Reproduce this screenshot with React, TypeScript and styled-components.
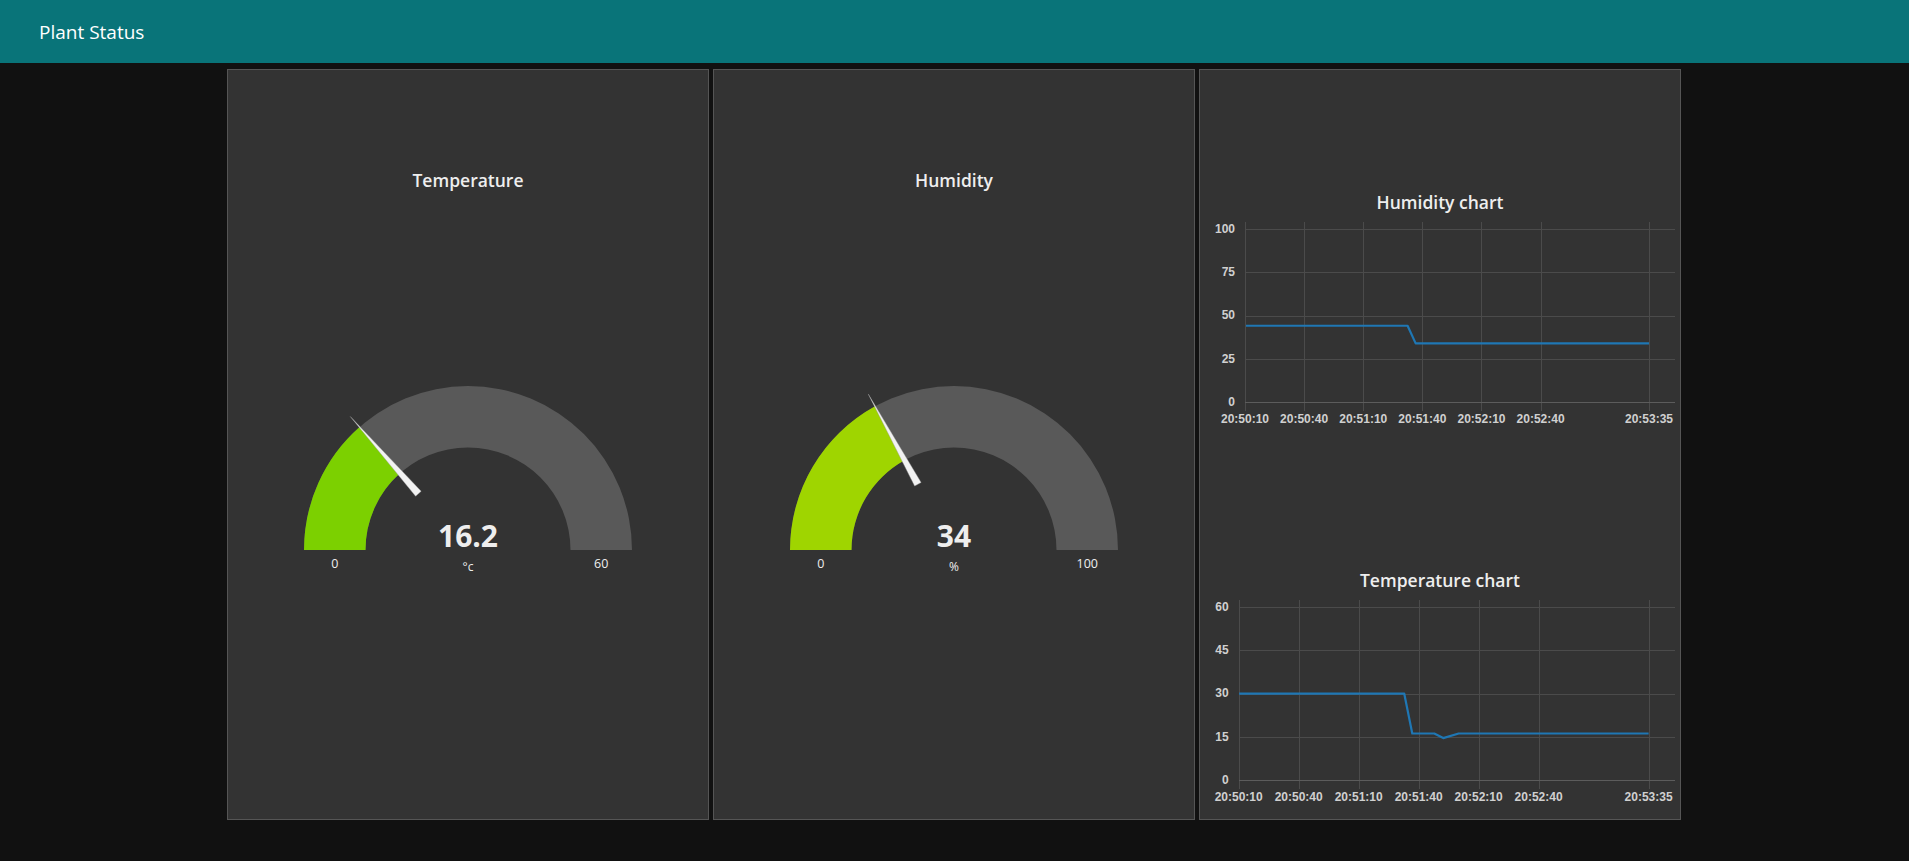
import React from 'react';
import styled, { createGlobalStyle } from 'styled-components';

const GlobalStyle = createGlobalStyle`
  html, body {
    margin: 0;
    padding: 0;
    background: #111111;
  }
  body {
    font-family: "Open Sans", "Noto Sans", sans-serif;
  }
`;

const Page = styled.div`
  min-height: 861px;
  background: #111111;
`;

const Toolbar = styled.header`
  height: 63px;
  box-sizing: border-box;
  background: #097479;
  display: flex;
  align-items: center;
  padding: 2px 0 0 39px;
`;

const ToolbarTitle = styled.h1`
  margin: 0;
  font-size: 19px;
  font-weight: 400;
  line-height: 19px;
  color: #ffffff;
`;

const Board = styled.main`
  display: flex;
  justify-content: center;
  gap: 4px;
  padding: 6px 1px 0 0;
`;

const Card = styled.section`
  width: 482px;
  height: 751px;
  box-sizing: border-box;
  background: #333333;
  border: 1px solid #555555;
  display: flex;
  flex-direction: column;
  align-items: center;
`;

const WidgetTitle = styled.h2<{ $top: number }>`
  margin: ${(p) => p.$top}px 0 0;
  font-size: 17.5px;
  font-weight: 600;
  line-height: 24px;
  color: #eeeeee;
`;

const Drawing = styled.svg<{ $top: number }>`
  display: block;
  margin-top: ${(p) => p.$top}px;
  flex: none;
`;

const GaugeValue = styled.text`
  font-family: "Open Sans", "Noto Sans", sans-serif;
  font-size: 30px;
  font-weight: 700;
  fill: #eeeeee;
`;

const GaugeLabel = styled.text<{ $size?: number }>`
  font-family: "Open Sans", "Noto Sans", sans-serif;
  font-size: ${(p) => p.$size ?? 12.5}px;
  font-weight: 400;
  fill: #eeeeee;
`;

const AxisLabel = styled.text`
  font-family: "Liberation Sans", Arial, sans-serif;
  font-size: 12px;
  font-weight: 700;
  fill: #d0d0d0;
`;

const GridLine = styled.line<{ $axis?: boolean }>`
  stroke: ${(p) => (p.$axis ? '#5c5c5c' : '#4b4b4b')};
  stroke-width: 1;
  shape-rendering: crispEdges;
`;

const DataLine = styled.polyline`
  fill: none;
  stroke: #1f77b4;
  stroke-width: 2.2;
  stroke-linejoin: round;
`;

type GaugeProps = {
  value: number;
  display: string;
  min: number;
  max: number;
  unit: string;
  color: string;
};

function Gauge({ value, display, min, max, unit, color }: GaugeProps) {
  const cx = 240;
  const cy = 180;
  const R = 164;
  const r = 102.5;
  const frac = (value - min) / (max - min);
  const a = Math.PI * (1 - frac);
  const c = Math.cos(a);
  const s = Math.sin(a);
  const ox = cx + R * c;
  const oy = cy - R * s;
  const ix = cx + r * c;
  const iy = cy - r * s;
  const bg = `M ${cx - R} ${cy} A ${R} ${R} 0 0 1 ${cx + R} ${cy} L ${cx + r} ${cy} A ${r} ${r} 0 0 0 ${cx - r} ${cy} Z`;
  const fill = `M ${cx - R} ${cy} A ${R} ${R} 0 0 1 ${ox} ${oy} L ${ix} ${iy} A ${r} ${r} 0 0 0 ${cx - r} ${cy} Z`;
  const tipR = 178;
  const baseR = 75;
  const hw = 3.7;
  const tx = cx + tipR * c;
  const ty = cy - tipR * s;
  const bx = cx + baseR * c;
  const by = cy - baseR * s;
  const px = s * hw;
  const py = c * hw;
  const needle = `${tx},${ty} ${bx + px},${by + py} ${bx - px},${by - py}`;
  const labelX = (R + r) / 2;
  return (
    <Drawing $top={178} width={480} height={215} viewBox="0 0 480 215">
      <path d={bg} fill="#595959" />
      <path d={fill} fill={color} />
      <polygon points={needle} fill="#f2f2f2" stroke="#9a9a9a" strokeWidth={0.4} />
      <GaugeValue x={cx} y={176.7} textAnchor="middle">
        {display}
      </GaugeValue>
      <GaugeLabel x={cx - labelX} y={197.5} textAnchor="middle">
        {min}
      </GaugeLabel>
      <GaugeLabel x={cx + labelX} y={197.5} textAnchor="middle">
        {max}
      </GaugeLabel>
      <GaugeLabel $size={12} x={cx} y={200.8} textAnchor="middle">
        {unit}
      </GaugeLabel>
    </Drawing>
  );
}

type ChartProps = {
  top: number;
  yTicks: number[];
  yMax: number;
  plotLeft: number;
  data: [number, number][];
};

const X_TICKS: [number, string][] = [
  [0, '20:50:10'],
  [30, '20:50:40'],
  [60, '20:51:10'],
  [90, '20:51:40'],
  [120, '20:52:10'],
  [150, '20:52:40'],
  [205, '20:53:35'],
];

function LineChart({ top, yTicks, yMax, plotLeft, data }: ChartProps) {
  const right = 475;
  const yTop = 15.2;
  const yBottom = 188.2;
  const span = 218.2;
  const xs = (t: number) => plotLeft + (t * (right - plotLeft)) / span;
  const ys = (v: number) => yBottom - (v / yMax) * (yBottom - yTop);
  const labelRight = plotLeft - 10;
  const pts = data.map(([t, v]) => `${xs(t).toFixed(2)},${ys(v).toFixed(2)}`).join(' ');
  return (
    <Drawing $top={top} width={480} height={220} viewBox="0 0 480 220">
      {X_TICKS.map(([t]) => (
        <GridLine key={`v${t}`} x1={Math.round(xs(t)) + 0.5} x2={Math.round(xs(t)) + 0.5} y1={8} y2={yBottom + 9} />
      ))}
      {yTicks.map((v) => (
        <GridLine
          key={`h${v}`}
          $axis={v === 0}
          x1={plotLeft}
          x2={right}
          y1={Math.round(ys(v)) + 0.5}
          y2={Math.round(ys(v)) + 0.5}
        />
      ))}
      {yTicks.map((v) => (
        <AxisLabel key={`yl${v}`} x={labelRight} y={ys(v) + 3.6} textAnchor="end">
          {v}
        </AxisLabel>
      ))}
      {X_TICKS.map(([t, l]) => (
        <AxisLabel key={`xl${t}`} x={xs(t)} y={208.8} textAnchor="middle">
          {l}
        </AxisLabel>
      ))}
      <DataLine points={pts} />
    </Drawing>
  );
}

export default function App() {
  return (
    <Page>
      <GlobalStyle />
      <Toolbar>
        <ToolbarTitle>Plant Status</ToolbarTitle>
      </Toolbar>
      <Board>
        <Card>
          <WidgetTitle $top={98}>Temperature</WidgetTitle>
          <Gauge value={16.2} display="16.2" min={0} max={60} unit="°c" color="#7cd000" />
        </Card>
        <Card>
          <WidgetTitle $top={98}>Humidity</WidgetTitle>
          <Gauge value={34} display="34" min={0} max={100} unit="%" color="#9fd500" />
        </Card>
        <Card>
          <WidgetTitle $top={120}>Humidity chart</WidgetTitle>
          <LineChart
            top={0}
            yTicks={[0, 25, 50, 75, 100]}
            yMax={100}
            plotLeft={45}
            data={[
              [0.5, 44.2],
              [82.5, 44.2],
              [86.6, 34],
              [205, 34],
            ]}
          />
          <WidgetTitle $top={134}>Temperature chart</WidgetTitle>
          <LineChart
            top={0}
            yTicks={[0, 15, 30, 45, 60]}
            yMax={60}
            plotLeft={38.7}
            data={[
              [0.2, 30],
              [82.8, 30],
              [86.8, 16.2],
              [97.8, 16.2],
              [102.3, 14.6],
              [110, 16.2],
              [205, 16.2],
            ]}
          />
        </Card>
      </Board>
    </Page>
  );
}
